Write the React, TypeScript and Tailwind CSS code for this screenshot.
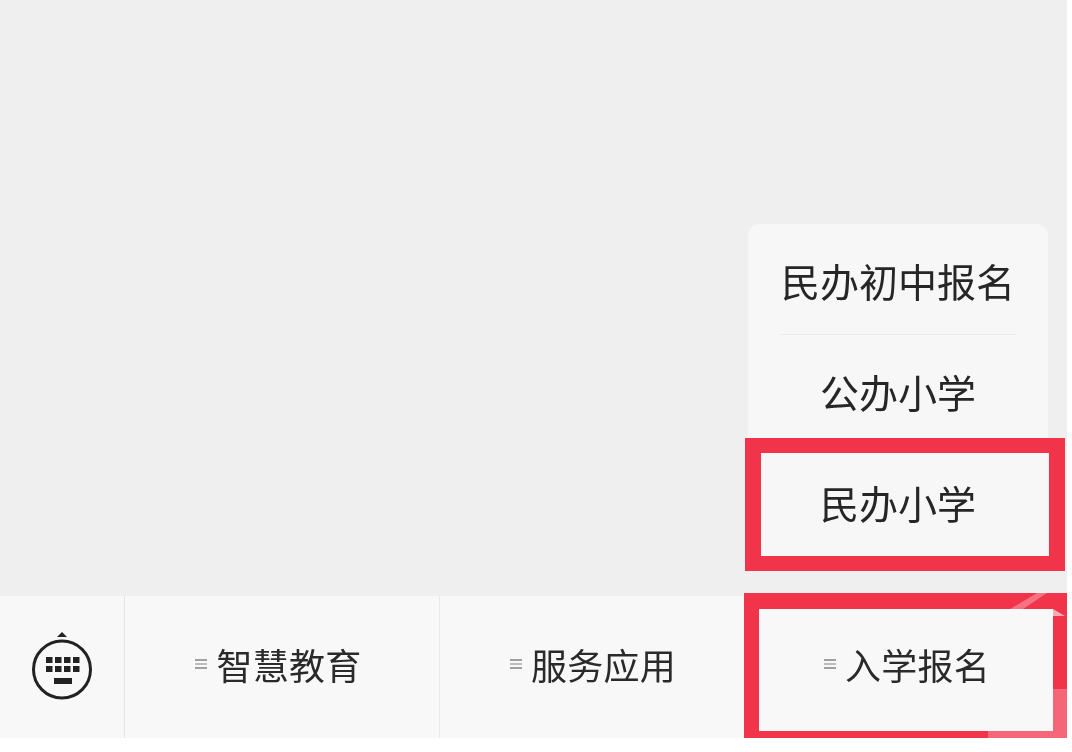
const cjk = { fontFamily: '"Noto Sans CJK SC", "Liberation Sans", sans-serif' };

function KeyboardIcon() {
  const keys = [0, 1, 2, 3];
  return (
    <svg width="64" height="76" viewBox="0 0 64 76" className="blur-[0.4px]">
      <path d="M32 3 L37 8 L27 8 Z" fill="#222" />
      <circle cx="32" cy="40.5" r="28.5" fill="none" stroke="#222" strokeWidth="3" />
      {keys.map((i) => (
        <rect key={`a${i}`} x={16 + i * 9} y={28} width="6.5" height="6" fill="#222" />
      ))}
      {keys.map((i) => (
        <rect key={`b${i}`} x={16 + i * 9} y={37} width="6.5" height="6" fill="#222" />
      ))}
      <rect x="24" y="49" width="18" height="6" fill="#222" />
    </svg>
  );
}

function MenuLines() {
  return (
    <span className="mr-[9px] flex w-[12px] flex-col gap-[2.5px] blur-[0.3px]">
      <span className="h-[1.5px] bg-[#a0a0a0]" />
      <span className="h-[1.5px] bg-[#bcbcbc]" />
      <span className="h-[1.5px] bg-[#a0a0a0]" />
    </span>
  );
}

function Tab({ label, className }: { label: string; className: string }) {
  return (
    <div className={`flex items-center justify-center pb-[6px] pr-[7px] ${className}`}>
      <MenuLines />
      <span className="text-[36px] leading-none tracking-[0.3px] text-[#2a2a2a] blur-[0.4px]">{label}</span>
    </div>
  );
}

function MenuItem({ label, divider }: { label: string; divider?: boolean }) {
  return (
    <div className={`relative flex items-center justify-center ${divider ? 'h-[110px]' : 'h-[111px] pt-[2px]'}`}>
      <span className="text-[39px] leading-none text-[#262626] blur-[0.4px]">{label}</span>
      {divider && <span className="absolute bottom-0 left-[32px] right-[32px] h-px bg-[#ebebeb]" />}
    </div>
  );
}

export default function App() {
  return (
    <div className="relative h-[752px] w-[1072px] overflow-hidden bg-white" style={cjk}>
      <div className="flex h-[738px] w-[1067px] flex-col">
        <div className="relative flex-1 bg-[#efefef]">
          <div className="absolute left-[748px] top-[224px] h-[341px] w-[300px] rounded-t-[12px] bg-[#f7f7f7] pt-px">
            <MenuItem label="民办初中报名" divider />
            <MenuItem label="公办小学" />
            <MenuItem label="民办小学" />
          </div>
        </div>
        <div className="flex h-[142px] bg-[#f8f8f8]">
          <div className="flex w-[125px] items-center justify-center border-r border-[#e4e4e4]">
            <KeyboardIcon />
          </div>
          <Tab label="智慧教育" className="w-[315px] border-r border-[#e8e8e8]" />
          <Tab label="服务应用" className="w-[314px] border-r border-[#f0f0f0]" />
          <Tab label="入学报名" className="flex-1" />
        </div>
      </div>

      {/* red highlight boxes drawn over the screenshot */}
      <div className="absolute left-[745px] top-[438px] h-[133px] w-[320px] border-x-[16px] border-y-[15px] border-[#f2344b] blur-[0.4px]" />
      <div className="absolute left-[744px] top-[593px] h-[145px] w-[323px] border-b-[7px] border-l-[15px] border-r-[14px] border-t-[16px] border-[#f2344b] blur-[0.4px]" />
      <div className="absolute left-[1053px] top-[689px] h-[49px] w-[14px] bg-white/25" />
      <div className="absolute left-[988px] top-[731px] h-[7px] w-[65px] bg-white/25" />
      <svg className="absolute left-[1005px] top-[590px]" width="62" height="40" viewBox="0 0 62 40">
        <path d="M5 19 L32 3 L42 3 L18 19 Z" fill="#ffffff" fillOpacity="0.3" />
        <path d="M48 19 L60 26 L48 26 Z" fill="#ffffff" fillOpacity="0.6" />
      </svg>
    </div>
  );
}
